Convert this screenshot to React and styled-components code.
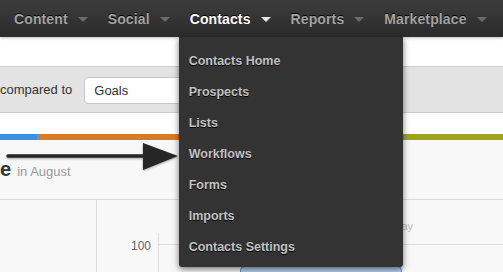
import React from 'react';
import styled, { createGlobalStyle } from 'styled-components';

const GlobalStyle = createGlobalStyle`
  html, body {
    margin: 0;
    padding: 0;
    background: #fff;
  }
  body {
    font-family: "Liberation Sans", Arial, sans-serif;
    overflow: hidden;
  }
`;

const Page = styled.div`
  position: relative;
  width: 503px;
  height: 272px;
  overflow: hidden;
  background: #fff;
`;

const NavBar = styled.nav`
  position: relative;
  z-index: 2;
  display: flex;
  align-items: center;
  height: 37px;
  padding-left: 4px;
  background: linear-gradient(#3c3c3c, #2b2b2b);
  box-shadow: 0 1px 3px rgba(0, 0, 0, 0.25);
`;

const NavItem = styled.div`
  position: relative;
  display: flex;
  align-items: center;
  gap: 10px;
  height: 37px;
  padding: 0 10px;
  font-size: 14px;
  font-weight: bold;
  letter-spacing: 0.12px;
  color: ${p => (p.$active ? '#fff' : '#a3a3a3')};
  text-shadow: 0 -1px 0 #000;
`;

const Caret = styled.span`
  width: 0;
  height: 0;
  margin-top: 1px;
  border-left: 5px solid transparent;
  border-right: 5px solid transparent;
  border-top: 5px solid ${p => (p.$active ? '#e6e6e6' : '#6a6a6a')};
`;

const Dropdown = styled.ul`
  position: absolute;
  top: 37px;
  left: -1px;
  width: 224px;
  margin: 0;
  padding: 9px 0 4px;
  list-style: none;
  background: #333;
  border-radius: 0 0 3px 3px;
  box-shadow: 0 2px 6px rgba(0, 0, 0, 0.55);
  letter-spacing: 0;
`;

const DropItem = styled.li`
  height: 31px;
  line-height: 31px;
  padding-left: 10px;
  font-size: 12.5px;
  font-weight: bold;
  color: #c2c2c2;
  text-shadow: 0 1px 0 #000;
`;

const TopStrip = styled.div`
  height: 29px;
  background: #fff;
`;

const FilterBand = styled.div`
  display: flex;
  align-items: center;
  height: 45px;
  background: #e3e3e3;
  border-top: 1px solid #cdcdcd;
  border-bottom: 1px solid #cdcdcd;
  font-size: 13px;
  color: #333;
`;

const Select = styled.div`
  display: flex;
  align-items: center;
  box-sizing: border-box;
  width: 200px;
  height: 27px;
  margin-left: 12px;
  margin-top: 1px;
  padding-left: 9px;
  background: #fff;
  border: 1px solid #c8c8c8;
  border-radius: 4px;
`;

const Spacer = styled.div`
  height: 21px;
  background: #fff;
`;

const ColorBar = styled.div`
  display: flex;
  height: 6px;
`;

const Segment = styled.div`
  flex: ${p => p.$flex};
  background: ${p => p.$color};
`;

const Content = styled.div`
  height: 132px;
  background: #f8f8f8;
`;

const HeadingRow = styled.div`
  display: flex;
  align-items: baseline;
  box-sizing: border-box;
  height: 60px;
  padding-top: 19px;
  border-bottom: 1px solid #dcdcdc;
`;

const Big = styled.span`
  font-size: 20px;
  line-height: 20px;
  font-weight: bold;
  color: #333;
`;

const Sub = styled.span`
  margin-left: 6px;
  font-size: 13px;
  color: #999;
`;

const ChartRow = styled.div`
  display: flex;
  height: 72px;
`;

const LeftCol = styled.div`
  width: 96px;
  border-right: 1px solid #dcdcdc;
`;

const Arrow = styled.svg`
  position: absolute;
  left: 0;
  top: 140px;
  z-index: 3;
  filter: drop-shadow(0 1px 1px rgba(0, 0, 0, 0.35));
`;

const navs = ['Content', 'Social', 'Contacts', 'Reports', 'Marketplace'];
const menu = ['Contacts Home', 'Prospects', 'Lists', 'Workflows', 'Forms', 'Imports', 'Contacts Settings'];

const App = () => {
  return (
    <Page>
      <GlobalStyle />
      <NavBar>
        {navs.map(n => {
          const active = n === 'Contacts';
          return (
            <NavItem key={n} $active={active}>
              <span>{n}</span>
              <Caret $active={active} />
              {active && (
                <Dropdown>
                  {menu.map(m => <DropItem key={m}>{m}</DropItem>)}
                </Dropdown>
              )}
            </NavItem>
          );
        })}
      </NavBar>
      <TopStrip />
      <FilterBand>
        <span>compared to</span>
        <Select>Goals</Select>
      </FilterBand>
      <Spacer />
      <ColorBar>
        <Segment $flex="37" $color="#3d8fdf" />
        <Segment $flex="300" $color="#d57c2b" />
        <Segment $flex="166" $color="#a0a41d" />
      </ColorBar>
      <Content>
        <HeadingRow>
          <Big>e</Big>
          <Sub>in August</Sub>
        </HeadingRow>
        <ChartRow>
          <LeftCol />
          <svg width="406" height="72">
            <line x1="61" y1="44.5" x2="406" y2="44.5" stroke="#dcdcdc" />
            <line x1="61.5" y1="33" x2="61.5" y2="72" stroke="#dcdcdc" />
            <text x="54" y="50" textAnchor="end" fontSize="12" fill="#666" fontFamily="Liberation Sans, Arial, sans-serif">100</text>
            <text x="316" y="30" textAnchor="end" fontSize="11" fill="#bbb" fontFamily="Liberation Sans, Arial, sans-serif">Today</text>
            <rect x="143.5" y="66.5" width="161" height="20" rx="4" fill="#b3cff0" stroke="#4a8ddb" />
          </svg>
        </ChartRow>
      </Content>
      <Arrow width="180" height="40" viewBox="0 140 180 40">
        <line x1="8" y1="156" x2="148" y2="156" stroke="#262626" strokeWidth="3.5" strokeLinecap="round" />
        <polygon points="143,143 178,156 143,170" fill="#262626" />
      </Arrow>
    </Page>
  );
};

export default App;
